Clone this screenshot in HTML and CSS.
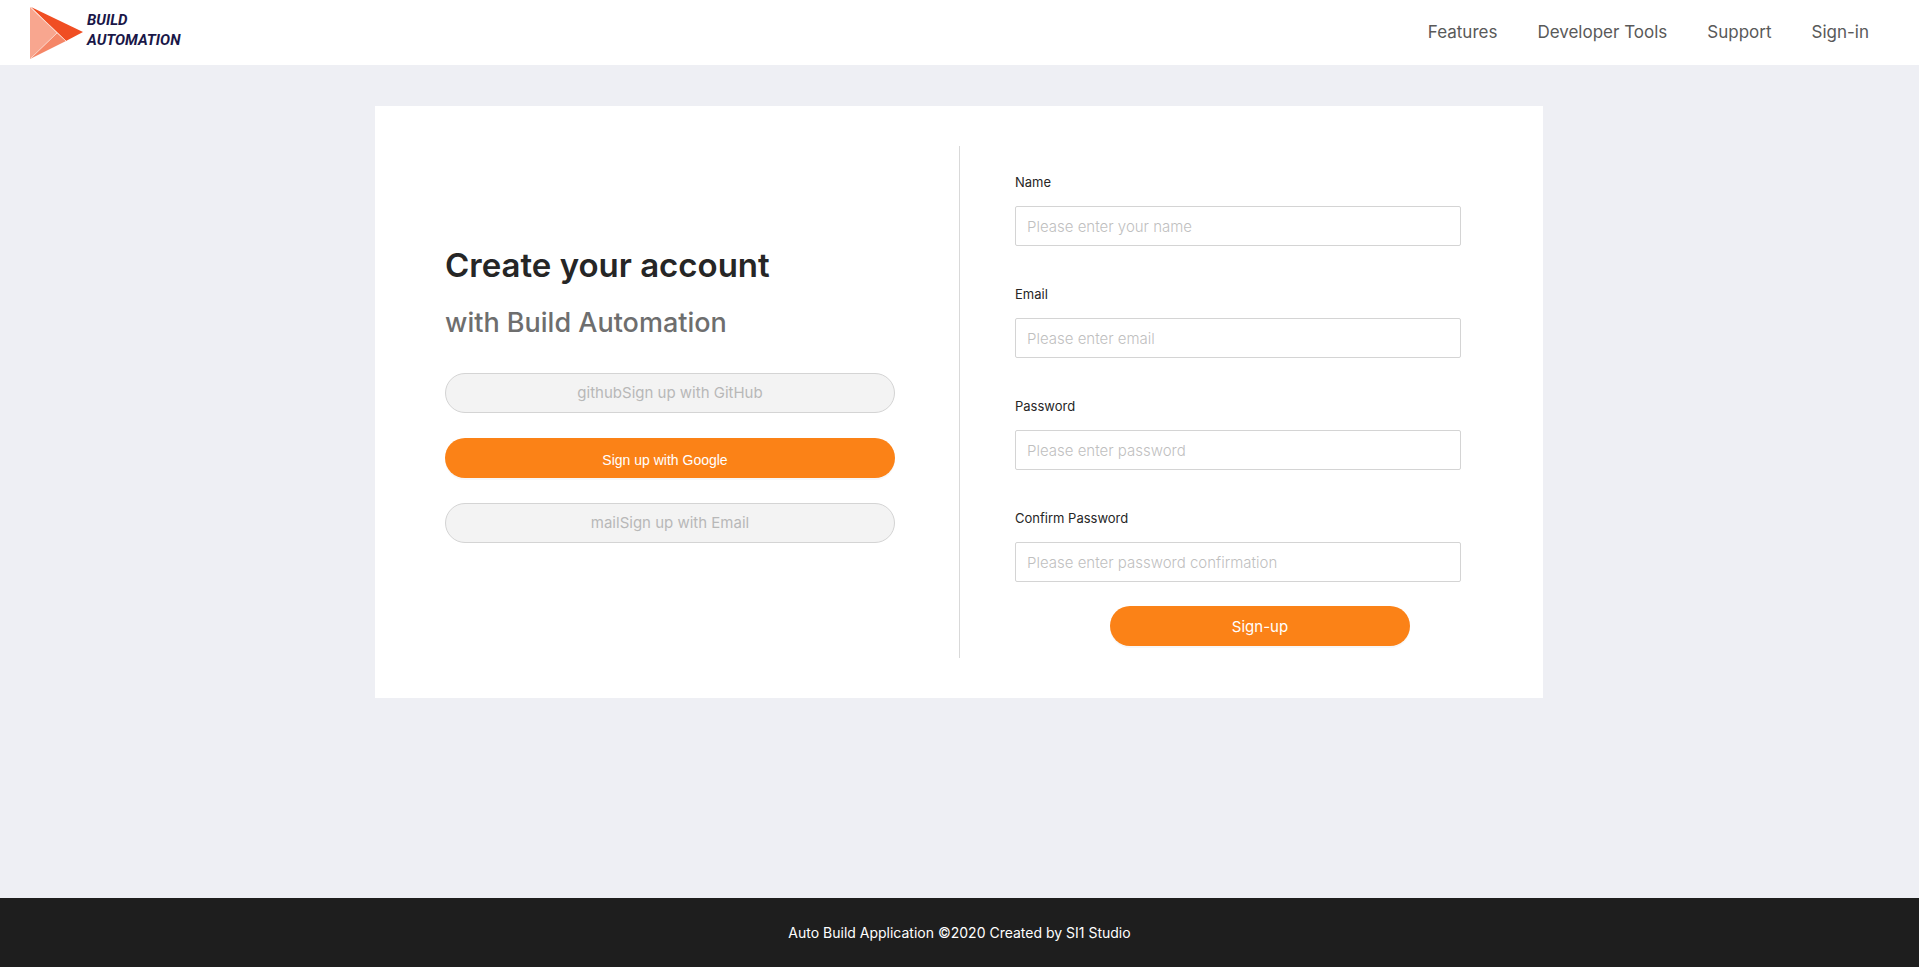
FILE: index.html
```html
<!DOCTYPE html>
<html lang="en">
<head>
<meta charset="utf-8">
<title>Build Automation</title>
<link rel="stylesheet" href="styles.css">
</head>
<body>
<header class="header">
  <a class="logo" href="#" aria-label="Build Automation">
    <svg class="logo-mark" viewBox="0 0 54 54" width="54" height="54" aria-hidden="true">
      <path d="M0 1v52L27 27z" fill="#f8a68f"/>
      <path d="M0 53L27 27l9 8z" fill="#f58667"/>
      <path d="M1 1l52 25-17 9z" fill="#f04e23"/>
      <path d="M0 1l36 34M1 52l26-25" fill="none" stroke="#fcd3c6"/>
    </svg>
    <span class="logo-text"><span>BUILD</span><span>AUTOMATION</span></span>
  </a>
  <nav class="nav">
    <a href="#">Features</a>
    <a href="#">Developer Tools</a>
    <a href="#">Support</a>
    <a href="#">Sign-in</a>
  </nav>
</header>
<main class="main">
  <div class="card">
    <section class="intro">
      <h1 class="title">Create your account</h1>
      <h2 class="subtitle">with Build Automation</h2>
      <div class="providers">
        <button class="btn btn-disabled" type="button" disabled>githubSign up with GitHub</button>
        <button class="btn btn-primary btn-google" type="button">Sign up with Google</button>
        <button class="btn btn-disabled" type="button" disabled>mailSign up with Email</button>
      </div>
    </section>
    <form class="form">
      <div class="field">
        <label for="name">Name</label>
        <input id="name" type="text" placeholder="Please enter your name">
      </div>
      <div class="field">
        <label for="email">Email</label>
        <input id="email" type="email" placeholder="Please enter email">
      </div>
      <div class="field">
        <label for="password">Password</label>
        <input id="password" type="password" placeholder="Please enter password">
      </div>
      <div class="field">
        <label for="confirm">Confirm Password</label>
        <input id="confirm" type="password" placeholder="Please enter password confirmation">
      </div>
      <button class="btn btn-primary btn-submit" type="submit">Sign-up</button>
    </form>
  </div>
</main>
<footer class="footer">Auto Build Application ©2020 Created by SI1 Studio</footer>
</body>
</html>
```
FILE: styles.css
```css
* {
  box-sizing: border-box;
}

body {
  margin: 0;
  min-height: 100vh;
  display: flex;
  flex-direction: column;
  background: #eeeff4;
  color: #262626;
  font-family: Inter, "Open Sans", sans-serif;
  font-size: 14px;
}

.header {
  display: flex;
  justify-content: space-between;
  align-items: center;
  height: 65px;
  padding: 0 50px 0 30px;
  background: #fff;
}

.logo {
  display: flex;
  align-items: center;
  gap: 3px;
  color: #1a1748;
  text-decoration: none;
}

.logo-text {
  display: flex;
  flex-direction: column;
  padding-bottom: 6px;
  font: italic bold 15px/20px Roboto, sans-serif;
}

.nav {
  display: flex;
  gap: 40px;
  padding-bottom: 2px;
}

.nav a {
  color: #595959;
  font-size: 17px;
  line-height: 24px;
  text-decoration: none;
}

.main {
  flex: 1;
  padding: 41px 25px 41px 24px;
}

.card {
  display: grid;
  grid-template-columns: 1fr 1fr;
  max-width: 1168px;
  margin: 0 auto;
  padding: 40px 0;
  background: #fff;
}

.intro {
  display: flex;
  flex-direction: column;
  justify-content: center;
  padding: 0 64px 18px 70px;
}

.title,
.subtitle {
  margin: 0;
}

.title {
  margin-bottom: 18px;
  font-size: 33px;
  font-weight: 600;
  line-height: 44px;
}

.subtitle {
  margin-bottom: 32px;
  color: #6e6e6e;
  font-size: 27px;
  font-weight: 500;
  line-height: 36px;
}

.providers {
  display: grid;
  gap: 25px;
}

.btn {
  height: 40px;
  padding: 0 16px;
  border: 1px solid transparent;
  border-radius: 20px;
  font-family: inherit;
  font-size: 15px;
}

.btn-disabled {
  padding-bottom: 2px;
  border-color: #d4d4d4;
  background: #f3f3f3;
  color: #b8b8b8;
}

.btn-primary {
  border: 0;
  background: #fb8217;
  color: #fff;
  box-shadow: 0 2px 0 rgba(0, 0, 0, 0.03);
}

.btn-google {
  padding: 4px 24px 0 14px;
  font-family: "Liberation Sans", sans-serif;
  font-size: 14px;
}

.form {
  display: flex;
  flex-direction: column;
  gap: 24px;
  padding: 20px 82px 12px 55px;
  border-left: 1px solid #d9d9d9;
}

.field {
  display: flex;
  flex-direction: column;
  gap: 8px;
  padding-bottom: 8px;
}

.field:nth-last-child(2) {
  padding-bottom: 0;
}

.field label {
  padding: 5px 0;
  font-size: 13px;
  line-height: 22px;
}

.field input {
  width: 100%;
  height: 40px;
  padding: 0 11px;
  border: 1px solid #d4d4d4;
  border-radius: 2px;
  background: #fff;
  color: inherit;
  font-family: inherit;
  font-size: 15px;
  font-weight: 300;
}

.field input::placeholder {
  color: #bfbfbf;
}

.btn-submit {
  width: 300px;
  margin-left: 95px;
}

.footer {
  padding: 24px 50px;
  background: #1e1e1e;
  color: #fff;
  font-size: 14px;
  line-height: 21px;
  text-align: center;
}
```
